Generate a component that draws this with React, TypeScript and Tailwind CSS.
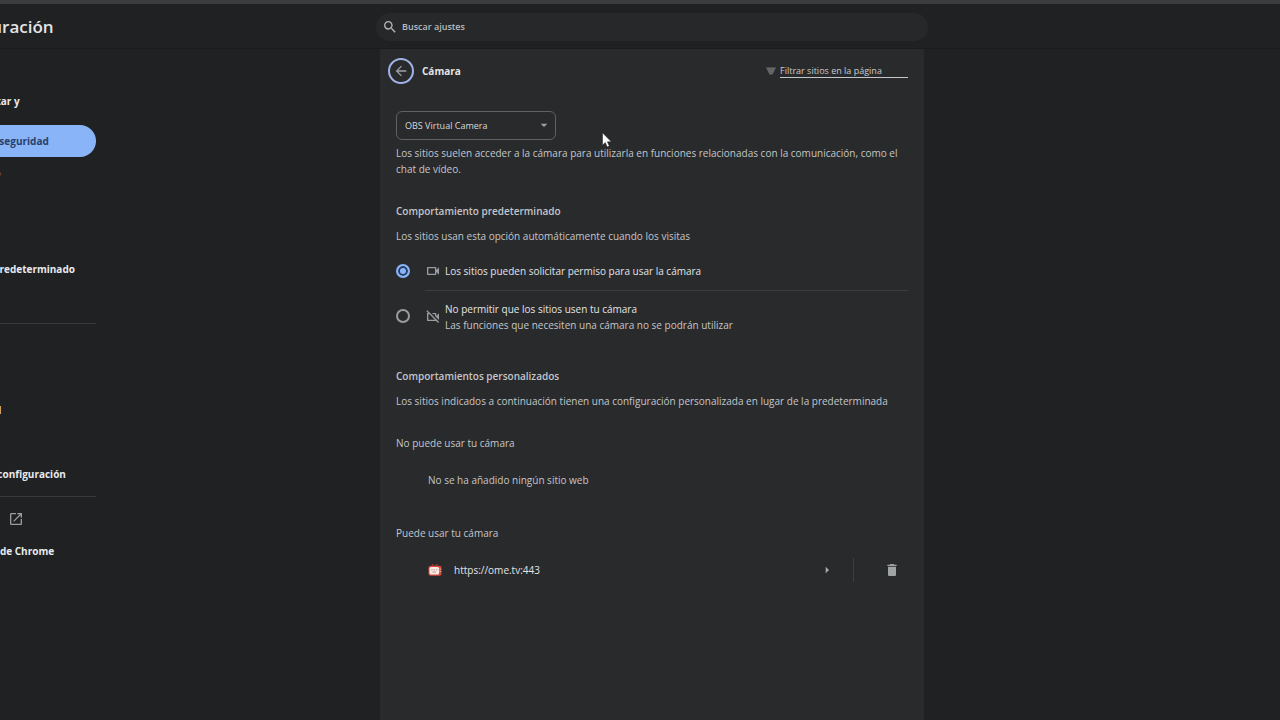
import React, { useState } from "react";
import {
  MdArrowBack,
  MdArrowDropDown,
  MdArrowRight,
  MdDelete,
  MdOpenInNew,
  MdOutlineVideocam,
  MdOutlineVideocamOff,
  MdSearch,
} from "react-icons/md";

interface MenuItem {
  label: string;
  active?: boolean;
  external?: boolean;
}

const MENU: MenuItem[][] = [
  [
    { label: "Google y tú" },
    { label: "Autocompletar y contraseñas" },
    { label: "Privacidad y seguridad", active: true },
    { label: "Rendimiento" },
    { label: "Apariencia" },
    { label: "Buscador" },
    { label: "Navegador predeterminado" },
    { label: "Al abrir" },
  ],
  [
    { label: "Idiomas" },
    { label: "Descargas" },
    { label: "Accesibilidad" },
    { label: "Sistema" },
    { label: "Restablecer configuración" },
  ],
  [
    { label: "Extensiones", external: true },
    { label: "Información de Chrome" },
  ],
];

const OPTIONS = [
  {
    id: "ask",
    icon: MdOutlineVideocam,
    title: "Los sitios pueden solicitar permiso para usar la cámara",
  },
  {
    id: "block",
    icon: MdOutlineVideocamOff,
    title: "No permitir que los sitios usen tu cámara",
    detail: "Las funciones que necesiten una cámara no se podrán utilizar",
  },
];

const Sidebar = () => (
  <aside className="overflow-hidden pt-3">
    <nav className="-ml-[100px] w-[196px]">
      {MENU.map((group, index) => (
        <ul
          key={index}
          className={index > 0 ? "mt-1.5 border-t border-[#38393b] pt-1.5" : ""}
        >
          {group.map((item) => (
            <li key={item.label}>
              <a
                href="#"
                className={`flex h-8 items-center rounded-r-full pl-9 leading-4 font-bold ${
                  item.active ? "bg-[#8ab4f8] text-[#27406b]" : "text-[#e8eaed]"
                }`}
              >
                <span className={item.label.length > 25 ? "w-24" : ""}>
                  {item.label}
                </span>
                {item.external && (
                  <MdOpenInNew className="ml-3 size-4 text-[#9a9c9f]" />
                )}
              </a>
            </li>
          ))}
        </ul>
      ))}
    </nav>
  </aside>
);

const FilterIcon = () => (
  <svg viewBox="0 0 10 8" className="h-2 w-2.5" aria-hidden="true">
    <path d="M0 0.5h10L6.5 7.5h-3z" fill="#68696b" />
    <path d="M1 2.8h8M2.5 5.2h5" stroke="#55575a" strokeWidth="0.6" />
  </svg>
);

const SiteIcon = () => (
  <svg viewBox="0 0 14 14" className="size-3.5" aria-hidden="true">
    <path d="M5.5 3 4.2 1.2M7.5 3 9.4 1" stroke="#d9483b" fill="none" />
    <rect x="0.5" y="2.8" width="13" height="10" rx="2" fill="#d9483b" />
    <rect x="1.5" y="4" width="9.6" height="7.6" rx="1.5" fill="#f6ece8" />
    <path
      d="M3.2 6.8h1.4M5.6 6.8h1.4M8 6.8h1.4M4.5 9h3.5"
      stroke="#d08a80"
      fill="none"
    />
    <circle cx="12.2" cy="6" r="0.6" fill="#f6ece8" />
    <circle cx="12.2" cy="8.5" r="0.6" fill="#f6ece8" />
  </svg>
);

const Pointer = () => (
  <svg
    viewBox="0 0 10 16"
    className="pointer-events-none absolute top-[83px] left-[222px] h-4 w-2.5"
    aria-hidden="true"
  >
    <path
      d="M0.5 0.8v12.4l2.8-2.6 1.9 4.4 2.1-0.9-1.9-4.3h3.9z"
      fill="#fff"
      stroke="#1c1c1c"
      strokeWidth="0.5"
    />
  </svg>
);

const CameraSettings = () => {
  const [option, setOption] = useState("ask");

  return (
    <main className="relative bg-[#292a2c] text-[#c4c6c9]">
      <div className="flex h-11 items-center pr-4 pl-2">
        <button
          aria-label="Atrás"
          className="flex size-[26px] items-center justify-center rounded-full border-2 border-[#9fb3e6]"
        >
          <MdArrowBack className="size-4 text-[#a0a2a5]" />
        </button>
        <h1 className="ml-2 font-bold text-[#e3e4e6]">Cámara</h1>
        <div className="ml-auto flex items-center gap-1">
          <FilterIcon />
          <input
            type="text"
            aria-label="Filtrar sitios en la página"
            placeholder="Filtrar sitios en la página"
            className="h-3.5 w-32 border-b border-[#c4c6c9] text-[9px] outline-none placeholder:text-[#c9cbce]"
          />
        </div>
      </div>

      <div className="px-4 pt-[18px] leading-4">
        <div className="relative w-40">
          <select
            aria-label="Cámara"
            className="block h-[29px] w-full appearance-none rounded-md border border-[#5f6163] px-2 text-[9px] font-medium text-[#d6d8da] outline-none"
          >
            <option>OBS Virtual Camera</option>
          </select>
          <MdArrowDropDown className="pointer-events-none absolute top-1.5 right-1 size-4 text-[#a0a2a5]" />
        </div>
        <p className="mt-[5px]">
          Los sitios suelen acceder a la cámara para utilizarla en funciones
          relacionadas con la comunicación, como el chat de vídeo.
        </p>

        <h2 className="mt-[26px] font-semibold">Comportamiento predeterminado</h2>
        <p className="mt-[9px]">
          Los sitios usan esta opción automáticamente cuando los visitas
        </p>
        <div className="mt-2">
          {OPTIONS.map(({ id, icon: Icon, title, detail }, index) => (
            <label key={id} className="flex items-center gap-[15px]">
              <input
                type="radio"
                name="camera"
                checked={option === id}
                onChange={() => setOption(id)}
                className="size-3.5 shrink-0 appearance-none rounded-full border-2 border-[#9a9c9f] checked:border-[#8ab4f8] checked:bg-[#8ab4f8] checked:shadow-[inset_0_0_0_2px_#263c63]"
              />
              <span
                className={`flex flex-1 items-center gap-1 ${
                  index > 0
                    ? "h-[52px] border-t border-[#3c3d3f]"
                    : "h-[38px]"
                }`}
              >
                <Icon className="size-4 text-[#9a9c9f]" />
                <span>
                  <span className="block font-medium text-[#e3e4e6]">
                    {title}
                  </span>
                  {detail && <span className="block">{detail}</span>}
                </span>
              </span>
            </label>
          ))}
        </div>

        <h2 className="mt-[26px] font-semibold">Comportamientos personalizados</h2>
        <p className="mt-[9px]">
          Los sitios indicados a continuación tienen una configuración
          personalizada en lugar de la predeterminada
        </p>

        <h3 className="mt-[26px]">No puede usar tu cámara</h3>
        <p className="flex h-[58px] items-center pl-8">
          No se ha añadido ningún sitio web
        </p>

        <h3 className="mt-4">Puede usar tu cámara</h3>
        <div className="flex h-[58px] items-center pl-8">
          <SiteIcon />
          <span className="ml-3 font-medium text-[#e3e4e6]">
            https://ome.tv:443
          </span>
          <button aria-label="Ver detalles" className="ml-auto">
            <MdArrowRight className="size-4 text-[#a9abae]" />
          </button>
          <span className="ml-[18px] h-6 w-px bg-[#3c3d3f]" />
          <button aria-label="Eliminar" className="mr-2 ml-[30px]">
            <MdDelete className="size-4 text-[#a0a3a3]" />
          </button>
        </div>
      </div>
      <Pointer />
    </main>
  );
};

const App = () => {
  return (
    <div className="flex min-h-screen flex-col overflow-hidden bg-[#202123] font-['Open_Sans','Noto_Sans',sans-serif] text-[10px]">
      <header className="grid h-[49px] grid-cols-[380px_minmax(0,544px)_1fr] items-center border-t-4 border-b border-t-[#3c3d3e] border-b-[#1a1b1c] pt-0.5">
        <div className="overflow-hidden">
          <div className="-ml-[61px] text-[17px] font-semibold text-[#e3e4e6]">
            Configuración
          </div>
        </div>
        <div className="-mx-1 flex h-7 items-center gap-1 rounded-full bg-[#272829] px-1.5">
          <MdSearch className="size-4 shrink-0 text-[#b4b6b9]" />
          <input
            type="search"
            aria-label="Buscar ajustes"
            placeholder="Buscar ajustes"
            className="w-full text-[9px] font-semibold text-[#bfc1c4] outline-none placeholder:text-[#b9bbbe]"
          />
        </div>
      </header>
      <div className="grid flex-1 grid-cols-[380px_minmax(0,544px)_1fr]">
        <Sidebar />
        <CameraSettings />
      </div>
    </div>
  );
};

export default App;
